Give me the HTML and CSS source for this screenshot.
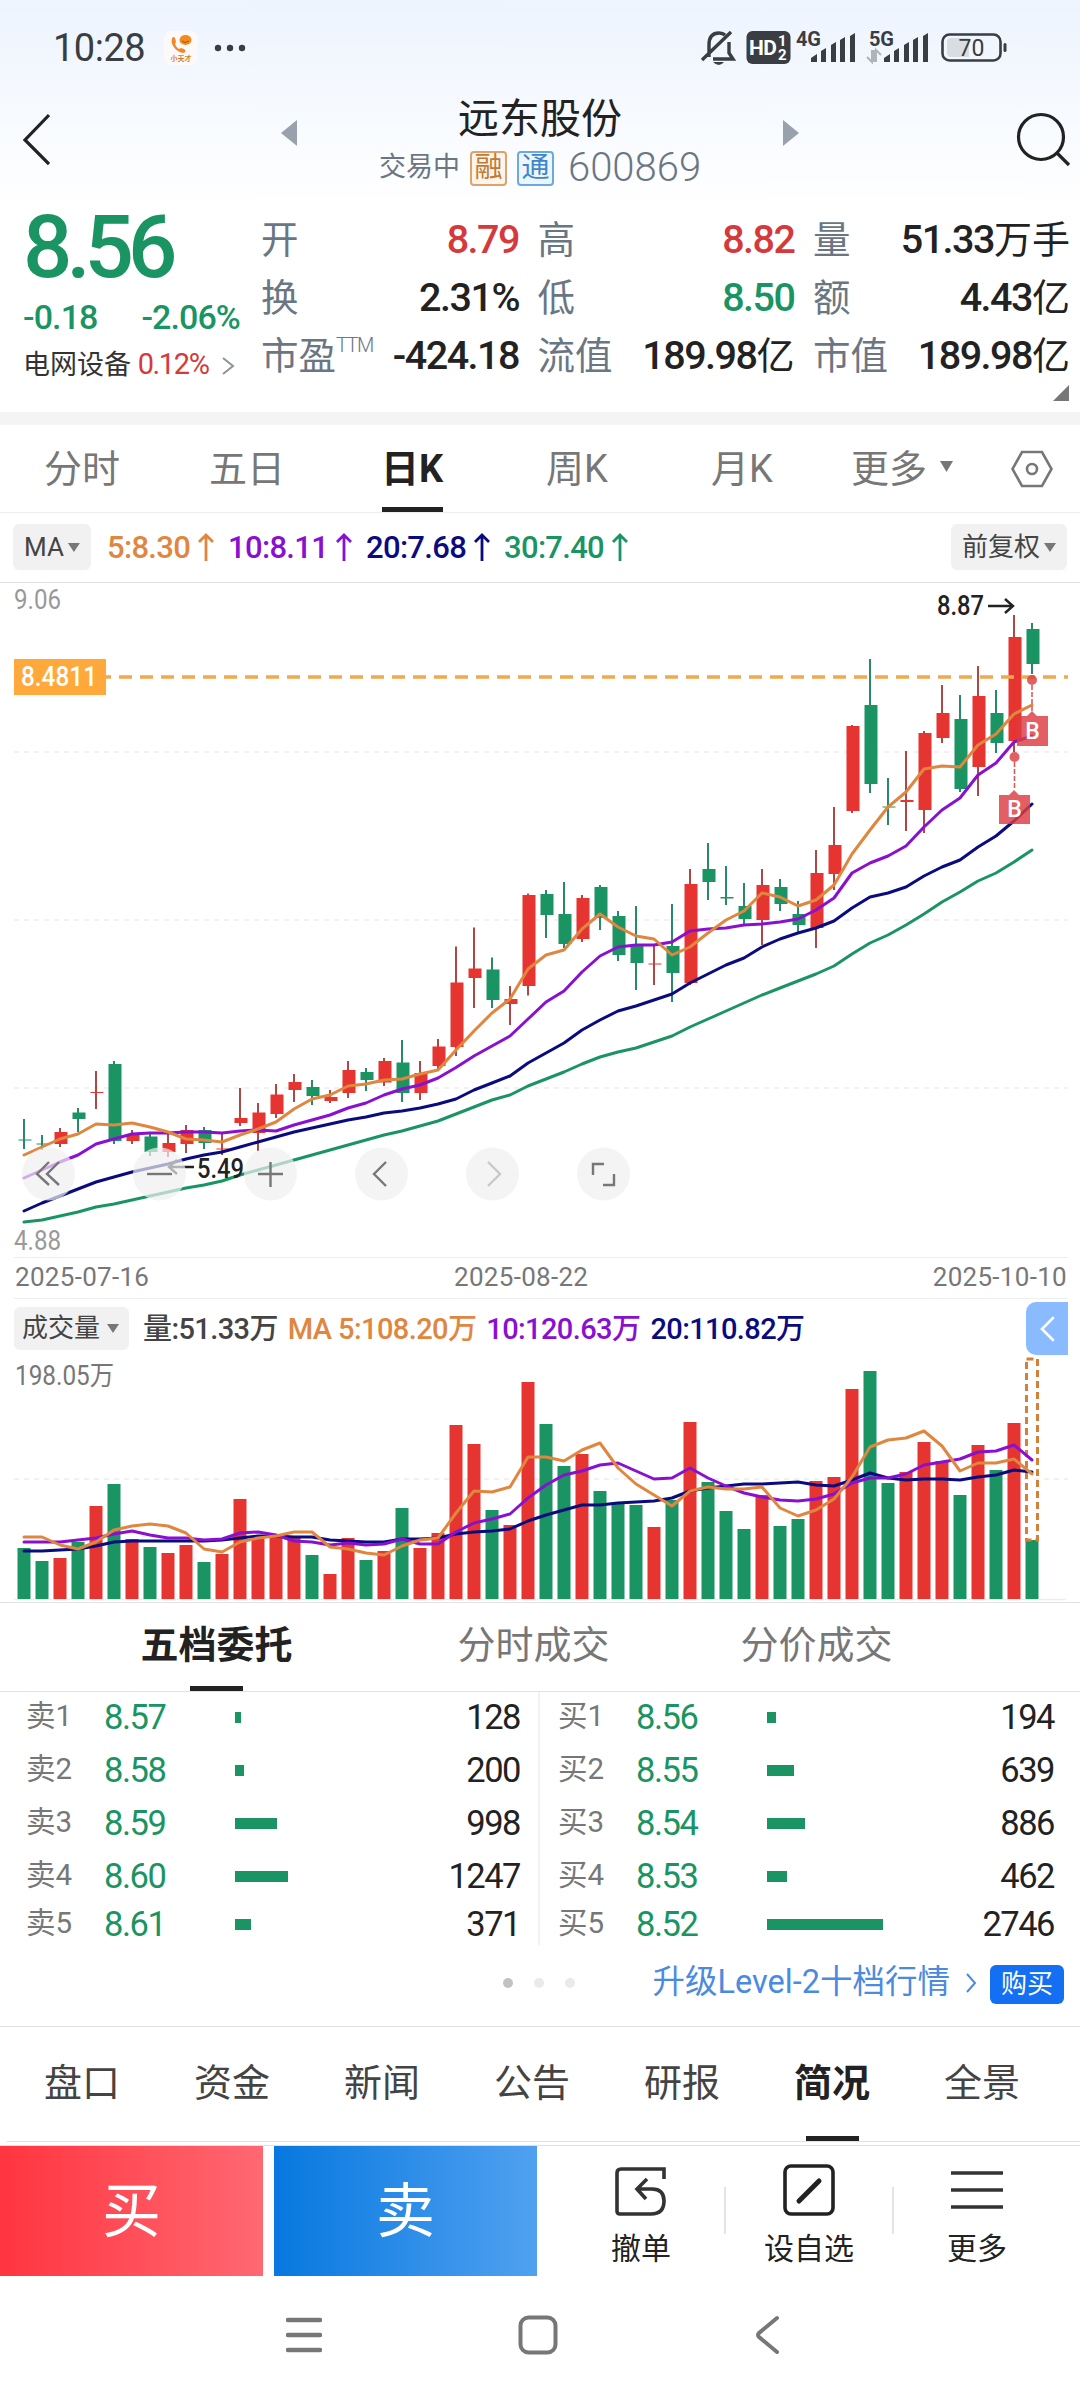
FILE: index.html
```html
<!DOCTYPE html>
<html lang="zh-CN">
<head>
    <meta charset="UTF-8">
    <meta name="viewport" content="width=device-width, initial-scale=1.0">
    <title>远东股份 600869</title>
    <link rel="stylesheet" href="styles.css">
</head>
<body>
    <div class="top">
        <div class="status-bar">
            <span class="clock">10:28</span>
            <svg class="app-icon" width="34" height="34" viewBox="0 0 34 34">
                <rect width="34" height="34" rx="8" fill="#fbfaf8"/>
                <path d="M8 8c-2 5 4 13 11 14 3 0 3-3 1-4l-3-1-2 1c-2-1-3-3-4-5l1-2-1-4c-1-2-3-1-3 1z" fill="#f0872a"/>
                <ellipse cx="21.500" cy="9" rx="6" ry="5" fill="#f58a1f"/>
                <path d="M18 10q3 3 7 0" fill="none" stroke="#a35200" stroke-width="1"/>
                <text x="17" y="30" font-size="7" font-weight="700" text-anchor="middle" fill="#e07a2a">小天才</text>
            </svg>
            <svg class="dots" width="32" height="8" viewBox="0 0 32 8" fill="#3a3d42">
                <circle cx="4" cy="4" r="3.200"/><circle cx="16" cy="4" r="3.200"/><circle cx="28" cy="4" r="3.200"/>
            </svg>
            <svg class="signals" width="310" height="40" viewBox="700 28 310 40" fill="#3a3d42">
                <g fill="none" stroke="#3a3d42" stroke-width="3.400">
                    <path d="M710 57V45q0-12 10-12 4 0 6 2M730 42v11l4 6H714M703 60l29-28"/>
                </g>
                <path d="M714 62h11q-5 6-11 0z"/>
                <rect x="747.500" y="31" width="44" height="33" rx="6"/>
                <text x="750" y="55" font-size="21" font-weight="700" fill="#fff" textLength="28">HD</text>
                <text x="779" y="46" font-size="15" font-weight="700" fill="#fff">1</text>
                <text x="779" y="60" font-size="15" font-weight="700" fill="#fff">2</text>
                <text x="797" y="46" font-size="20" font-weight="700" textLength="25">4G</text>
                <text x="870" y="46" font-size="20" font-weight="700" textLength="25">5G</text>
                <path d="M812 62v-4l6-4v8zM822 62v-11l5-3v14zM832 62v-17l5-3v20zM841 62v-22l5-3v25zM851 62v-26l5-3v29z"/>
                <path d="M885 62v-4l6-4v8zM895 62v-11l5-3v14zM905 62v-17l5-3v20zM914 62v-22l5-3v25zM924 62v-26l5-3v29z"/>
                <path d="M868 57l5 5V51h2v11M882 55l-5-5v11h-1" stroke="#b0b4ba" stroke-width="2" fill="none"/>
                <rect x="943.500" y="34.500" width="58" height="26" rx="7" fill="none" stroke="#3a3d42" stroke-width="2.600"/>
                <path d="M952 38h18v19h-18q-4 0-4-4V42q0-4 4-4z" fill="#d9dce1"/>
                <text x="972.500" y="56" font-size="23" text-anchor="middle">70</text>
                <rect x="1004.500" y="43" width="3" height="9" rx="1.500"/>
            </svg>
        </div>

        <div class="header">
            <svg width="50" height="54" viewBox="0 0 50 54" fill="none" stroke="#222" stroke-width="3.200">
                <path d="M49 3L25 28l24 24"/>
            </svg>
            <div class="switcher">
                <i class="arrow-left"></i>
                <div class="stock">
                    <div class="stock-name">远东股份</div>
                    <div class="stock-code">
                        <span>交易中</span>
                        <b class="badge-rong">融</b>
                        <b class="badge-tong">通</b>
                        <span class="code">600869</span>
                    </div>
                </div>
                <i class="arrow-right"></i>
            </div>
            <svg class="search" width="64" height="60" viewBox="0 0 64 60" fill="none" stroke="#222" stroke-width="3.200">
                <circle cx="25" cy="27" r="22.500"/>
                <path d="M41 43l12 12"/>
            </svg>
        </div>

        <div class="quote">
            <div class="quote-main">
                <div class="price">8.56</div>
                <div class="change"><span>-0.18</span><span>-2.06%</span></div>
                <div class="sector">电网设备 <span class="red">0.12%</span>
                    <svg width="14" height="20" viewBox="0 0 14 20" fill="none" stroke="#8b939c" stroke-width="2"><path d="M2 2l10 8-10 8"/></svg>
                </div>
            </div>
            <div class="quote-grid">
                <div class="cell"><label>开</label><span class="red">8.79</span></div>
                <div class="cell"><label>高</label><span class="red">8.82</span></div>
                <div class="cell"><label>量</label><span>51.33<em>万手</em></span></div>
                <div class="cell"><label>换</label><span>2.31%</span></div>
                <div class="cell"><label>低</label><span class="green">8.50</span></div>
                <div class="cell"><label>额</label><span>4.43<em>亿</em></span></div>
                <div class="cell"><label>市盈<sup>TTM</sup></label><span>-424.18</span></div>
                <div class="cell"><label>流值</label><span>189.98<em>亿</em></span></div>
                <div class="cell"><label>市值</label><span>189.98<em>亿</em></span></div>
            </div>
            <i class="corner"></i>
        </div>
    </div>

    <div class="period-tabs">
        <div class="tab">分时</div>
        <div class="tab">五日</div>
        <div class="tab active">日K</div>
        <div class="tab">周K</div>
        <div class="tab">月K</div>
        <div class="tab more">更多<i class="caret"></i></div>
        <svg class="gear" width="42" height="38" viewBox="0 0 42 38" fill="none" stroke="#777" stroke-width="2.600">
            <path d="M11 2h20l9.500 17L31 36H11L1.500 19z"/>
            <circle cx="21" cy="19" r="5"/>
        </svg>
    </div>

    <div class="ma-row">
        <span class="chip">MA<i class="caret"></i></span>
        <span class="ma ma5">5:8.30</span><svg class="up ma5" viewBox="0 0 16 28"><path d="M8 28V2M1 9l7-7 7 7"/></svg>
        <span class="ma ma10">10:8.11</span><svg class="up ma10" viewBox="0 0 16 28"><path d="M8 28V2M1 9l7-7 7 7"/></svg>
        <span class="ma ma20">20:7.68</span><svg class="up ma20" viewBox="0 0 16 28"><path d="M8 28V2M1 9l7-7 7 7"/></svg>
        <span class="ma ma30">30:7.40</span><svg class="up ma30" viewBox="0 0 16 28"><path d="M8 28V2M1 9l7-7 7 7"/></svg>
        <span class="chip right">前复权<i class="caret"></i></span>
    </div>

    <svg class="kline" width="1080" height="674" viewBox="0 583 1080 674">
        <path class="grid" d="M14 752H1068M14 920H1068M14 1088H1068"/>
        <g id="candles"></g>
        <g id="ma-lines"></g>

        <path class="cost-line" d="M106 677H1068"/>
        <rect x="14" y="659" width="92" height="36" fill="#ffa93c"/>
        <text x="21" y="686" font-size="27" font-weight="500" fill="#fff" textLength="76" lengthAdjust="spacingAndGlyphs">8.4811</text>

        <text class="axis" x="14" y="609" textLength="47" lengthAdjust="spacingAndGlyphs">9.06</text>
        <text class="axis" x="14" y="1250" textLength="47" lengthAdjust="spacingAndGlyphs">4.88</text>

        <text class="mark" x="937" y="615" textLength="47" lengthAdjust="spacingAndGlyphs">8.87</text>
        <path class="mark-arrow" d="M988 606h25M1005 599l8 7-8 7"/>
        <text class="mark" x="197" y="1178" textLength="47" lengthAdjust="spacingAndGlyphs">5.49</text>
        <path class="mark-arrow" d="M194 1167h-25M177 1160l-8 7 8 7"/>

        <!-- buy marks -->
        <g class="buy-mark">
            <circle cx="1032" cy="680" r="5"/>
            <path class="leader" d="M1032 685v28"/>
            <path d="M1017 716h10l5-5 5 5h11v30h-31z"/>
            <text x="1032.500" y="739">B</text>
        </g>
        <g class="buy-mark">
            <circle cx="1014.500" cy="757" r="5"/>
            <path class="leader" d="M1014.500 762v28"/>
            <path d="M999 795h10l5-5 5 5h11v29H999z"/>
            <text x="1014.500" y="817">B</text>
        </g>

        <g class="tools">
            <circle cx="48.500" cy="1174" r="26.500"/><path d="M49 1162l-12 12 12 11M59 1162l-12 12 12 11"/>
            <circle cx="159.500" cy="1174" r="26.500"/><path d="M147 1174h25"/>
            <circle cx="270.500" cy="1174" r="26.500"/><path d="M258 1174h25M270.500 1162v25"/>
            <circle cx="381.500" cy="1174" r="26.500"/><path d="M386 1162l-12 12 12 12"/>
            <circle cx="492.500" cy="1174" r="26.500"/><path class="off" d="M488 1162l12 12-12 12"/>
            <circle cx="603.500" cy="1174" r="26.500"/><path d="M593 1175v-11h11M614 1174v11h-11"/>
        </g>
    </svg>

    <div class="dates">
        <span>2025-07-16</span><span>2025-08-22</span><span>2025-10-10</span>
    </div>

    <div class="vol-row">
        <span class="chip">成交量<i class="caret"></i></span>
        <span class="ma">量:51.33万</span>
        <span class="ma ma5">MA 5:108.20万</span>
        <span class="ma ma10">10:120.63万</span>
        <span class="ma ma20">20:110.82万</span>
        <span class="drawer"><svg width="16" height="26" viewBox="0 0 16 26" fill="none" stroke="#fff" stroke-width="2.600" stroke-linecap="round"><path d="M14 2L3 13l11 11"/></svg></span>
    </div>

    <svg class="volume" width="1080" height="246" viewBox="0 1355 1080 246">
        <path class="grid" d="M14 1479H1068"/>
        <path d="M14 1599.500H1066" stroke="#eee" stroke-width="1.500"/>
        <text x="15" y="1385" font-size="27" fill="#777" textLength="99" lengthAdjust="spacingAndGlyphs">198.05万</text>
        <g id="volumes"></g>
        <rect x="1026.500" y="1359" width="11" height="181" fill="none" stroke="#d4803a" stroke-width="3" stroke-dasharray="7 4"/>
        <g id="vol-lines"></g>
    </svg>

    <div class="order-tabs">
        <div class="tab active">五档委托</div>
        <div class="tab">分时成交</div>
        <div class="tab">分价成交</div>
    </div>

    <div class="orders">
        <div class="side">
            <div class="order"><span>卖1</span><b>8.57</b><i style="width: 6px"></i><em>128</em></div>
            <div class="order"><span>卖2</span><b>8.58</b><i style="width: 9px"></i><em>200</em></div>
            <div class="order"><span>卖3</span><b>8.59</b><i style="width: 42px"></i><em>998</em></div>
            <div class="order"><span>卖4</span><b>8.60</b><i style="width: 53px"></i><em>1247</em></div>
            <div class="order"><span>卖5</span><b>8.61</b><i style="width: 16px"></i><em>371</em></div>
        </div>
        <div class="side">
            <div class="order"><span>买1</span><b>8.56</b><i style="width: 9px"></i><em>194</em></div>
            <div class="order"><span>买2</span><b>8.55</b><i style="width: 27px"></i><em>639</em></div>
            <div class="order"><span>买3</span><b>8.54</b><i style="width: 38px"></i><em>886</em></div>
            <div class="order"><span>买4</span><b>8.53</b><i style="width: 20px"></i><em>462</em></div>
            <div class="order"><span>买5</span><b>8.52</b><i style="width: 116px"></i><em>2746</em></div>
        </div>
    </div>

    <div class="upgrade">
        <div class="pager"><i class="on"></i><i></i><i></i></div>
        <div class="level2">
            <span>升级Level-2十档行情</span>
            <svg width="12" height="20" viewBox="0 0 12 20" fill="none" stroke="#4a8be0" stroke-width="2"><path d="M2 1l8 9-8 9"/></svg>
            <b>购买</b>
        </div>
    </div>

    <div class="info-tabs">
        <div class="tab">盘口</div>
        <div class="tab">资金</div>
        <div class="tab">新闻</div>
        <div class="tab">公告</div>
        <div class="tab">研报</div>
        <div class="tab active">简况</div>
        <div class="tab">全景</div>
    </div>

    <div class="trade-bar">
        <div class="buy">买</div>
        <div class="sell">卖</div>
        <div class="actions">
            <div class="action">
                <svg width="52" height="52" viewBox="0 0 52 52" fill="none" stroke="#333" stroke-width="3.600">
                    <path d="M49 15V5H6Q2 5 2 9v38q0 3 3 3h31q13 0 13-13 0-12-12-12H24M32 15L22 25l9 10"/>
                </svg>
                <span>撤单</span>
            </div>
            <div class="action">
                <svg width="52" height="52" viewBox="0 0 52 52" fill="none" stroke="#222" stroke-width="3.600">
                    <rect x="2" y="2" width="48" height="48" rx="6"/>
                    <path d="M16 37l20-20" stroke-width="5" stroke-linecap="round"/>
                </svg>
                <span>设自选</span>
            </div>
            <div class="action">
                <svg width="52" height="52" viewBox="0 0 52 52" fill="none" stroke="#333" stroke-width="3.600">
                    <path d="M0 9h52M0 26h52M0 43h52"/>
                </svg>
                <span>更多</span>
            </div>
        </div>
    </div>

    <div class="nav-bar">
        <svg width="36" height="38" viewBox="0 0 36 38" stroke="#777" stroke-width="4.500" stroke-linecap="round"><path d="M2 4h32M2 19h32M2 34h32"/></svg>
        <svg width="40" height="40" viewBox="0 0 40 40" fill="none" stroke="#777" stroke-width="4"><rect x="2.500" y="2.500" width="35" height="35" rx="8"/></svg>
        <svg width="26" height="40" viewBox="0 0 26 40" fill="none" stroke="#777" stroke-width="4" stroke-linecap="round"><path d="M23 3L5 18q-2 2 0 4l18 15"/></svg>
    </div>

    <script src="chart.js"></script>
</body>
</html>
```
FILE: styles.css
```css
* {
    margin: 0;
    padding: 0;
    box-sizing: border-box;
}

body {
    width: 1080px;
    height: 2400px;
    background: #fff;
    color: #222;
    font-family: Roboto, 'Noto Sans CJK SC', sans-serif;
    overflow: hidden;
}

b, i, em {
    font-weight: 400;
    font-style: normal;
}

.red { color: #d5393b; }
.green { color: #1b9463; }

.top {
    height: 412px;
    background: linear-gradient(#edf4fe, #fff 210px);
}

/* Status bar */
.status-bar {
    display: flex;
    align-items: center;
    height: 96px;
    padding: 0 71px 0 53px;
    color: #3a3d42;
}

.clock {
    width: 111px;
    font-size: 38px;
    letter-spacing: -0.5px;
}

.dots {
    margin-left: 16px;
}

.signals {
    margin-left: auto;
}

/* Title */
.header {
    display: flex;
    justify-content: space-between;
    height: 104px;
}

.header > svg {
    margin-top: 16px;
}

.header .search {
    margin-top: 14px;
}

.switcher {
    display: flex;
    justify-content: space-between;
    width: 518px;
    margin-left: 14px;
}

.arrow-left, .arrow-right {
    width: 16px;
    height: 26px;
    margin-top: 24px;
    background: #98a1ac;
    clip-path: polygon(100% 0, 100% 100%, 0 50%);
}

.arrow-right {
    clip-path: polygon(0 0, 100% 50%, 0 100%);
}

.stock {
    text-align: center;
}

.stock-name {
    height: 50px;
    font-size: 41px;
    line-height: 46px;
}

.stock-code {
    display: flex;
    align-items: center;
    gap: 10px;
    height: 44px;
    font-size: 27px;
    line-height: 40px;
    color: #6b7683;
}

.stock-code span:first-child {
    margin-top: -2px;
}

.stock-code b {
    width: 37px;
    height: 35px;
    border: 2px solid #dca468;
    border-radius: 4px;
    background: #fdf5ec;
    color: #c07a34;
    font-size: 28px;
    line-height: 30px;
}

.stock-code .badge-tong {
    border-color: #6aa9e4;
    background: #edf5fd;
    color: #3d86cc;
}

.stock-code .code {
    margin-left: 4px;
    font-size: 40px;
    font-weight: 350;
}

/* Quote */
.quote {
    position: relative;
    display: flex;
    height: 212px;
    padding: 0 9px 0 23px;
}

.quote-main {
    width: 238px;
    color: #1b9463;
}

.price {
    height: 94px;
    font-size: 87px;
    font-weight: 500;
    line-height: 94px;
    letter-spacing: -6px;
}

.change {
    display: flex;
    justify-content: space-between;
    width: 217px;
    height: 48px;
    font-size: 34px;
    font-weight: 500;
    line-height: 46px;
    letter-spacing: -0.9px;
}

.sector {
    font-size: 27px;
    line-height: 44px;
    color: #333;
    white-space: nowrap;
}

.sector .red {
    font-size: 29px;
    letter-spacing: -1.4px;
}

.sector svg {
    margin-left: 6px;
    vertical-align: -2px;
}

.quote-grid {
    display: grid;
    grid-template-columns: 258px 257px 257px;
    grid-auto-rows: 58px;
    column-gap: 18.5px;
    height: 174px;
    margin-top: 11px;
}

.cell {
    display: flex;
    justify-content: space-between;
    align-items: center;
    white-space: nowrap;
    line-height: 58px;
}

.cell label {
    font-size: 37.5px;
    color: #6b7683;
}

.cell sup {
    font-size: 20px;
    font-weight: 300;
    letter-spacing: -1.5px;
    vertical-align: 17px;
    line-height: 0;
}

.cell span {
    font-size: 39.5px;
    font-weight: 500;
    letter-spacing: -1.5px;
}

.cell em {
    font-size: 38px;
    letter-spacing: 0;
}

.corner {
    position: absolute;
    right: 11px;
    bottom: 11px;
    width: 16px;
    height: 16px;
    background: #777;
    clip-path: polygon(100% 0, 100% 100%, 0 100%);
}

/* K line period */
.period-tabs {
    display: flex;
    height: 101px;
    padding-right: 27px;
    border-top: 13px solid #f4f4f4;
    border-bottom: 1px solid #eee;
    align-items: center;
}

.tab {
    position: relative;
    display: flex;
    justify-content: center;
    align-items: center;
    font-size: 38px;
    color: #777;
}

.period-tabs .tab {
    width: 165px;
    height: 87px;
    padding: 0 1px 6px 0;
}

.period-tabs .more {
    width: 155px;
}

.gear {
    margin-left: auto;
}

.tab.active {
    color: #222;
    font-weight: 700;
}

.tab.active::after {
    content: '';
    position: absolute;
    bottom: 0;
    width: 53px;
    height: 5px;
    background: #222;
}

.period-tabs .active::after {
    width: 61px;
}

.caret {
    display: inline-block;
    width: 12px;
    height: 9px;
    margin-left: 4px;
    background: #777;
    clip-path: polygon(0 0, 100% 0, 50% 100%);
    vertical-align: 4px;
}

.more .caret {
    height: 11px;
    width: 13px;
    margin: 2px 0 0 13px;
}

.ma-row {
    display: flex;
    align-items: center;
    height: 70px;
    padding: 0 13px 1px;
    border-bottom: 1.5px solid #e2e2e2;
}

.chip {
    height: 46px;
    padding: 0 11px;
    border-radius: 6px;
    background: #f1f1f1;
    color: #444;
    font-size: 26px;
    line-height: 46px;
    white-space: nowrap;
}

.ma-row .chip:first-child {
    width: 78px;
    margin-right: 16px;
}

.chip.right {
    width: 116px;
    margin-left: auto;
}

.ma {
    font-size: 31px;
    font-weight: 500;
    letter-spacing: -0.7px;
    white-space: nowrap;
}

.up {
    width: 16px;
    height: 28px;
    margin: 0 14px 0 8px;
    fill: none;
    stroke: currentColor;
    stroke-width: 2.8;
}

.ma5 { color: #e0863f; }
.ma10 { color: #8a10d0; }
.ma20 { color: #0b0b80; }
.ma30 { color: #1b9463; }

/* K line chart */
.kline, .volume {
    display: block;
}

.grid {
    fill: none;
    stroke: #ededee;
    stroke-width: 1.5;
    stroke-dasharray: 5 5;
}

.axis {
    font-size: 27px;
    fill: #999;
}

.mark {
    font-size: 27px;
    font-weight: 500;
    fill: #222;
}

.mark-arrow {
    fill: none;
    stroke: #222;
    stroke-width: 2.4;
}

.line {
    fill: none;
    stroke: currentColor;
    stroke-width: 3;
    stroke-linejoin: round;
    stroke-linecap: round;
}

.cost-line {
    stroke: #f0a94c;
    stroke-width: 3.4;
    stroke-dasharray: 13 8;
    stroke-dashoffset: 8;
}

.buy-mark {
    fill: rgba(220, 60, 65, 0.82);
}

.buy-mark .leader {
    stroke: #dc5a5e;
    stroke-width: 1.6;
    stroke-dasharray: 5 2;
}

.buy-mark text {
    font-size: 23px;
    font-weight: 500;
    text-anchor: middle;
    fill: #fff;
}

.tools circle {
    fill: rgba(240, 240, 240, 0.7);
}

.tools path {
    fill: none;
    stroke: #777;
    stroke-width: 2.4;
}

.tools .off {
    stroke: #c8c8c8;
}

.dates {
    display: grid;
    grid-template-columns: 439px 1fr auto;
    height: 42px;
    margin: 0 12px 0 14px;
    padding: 0 1px;
    border-top: 1.5px solid #eee;
    border-bottom: 1.5px solid #eee;
    color: #777;
    font-size: 26px;
    line-height: 39px;
    letter-spacing: 0.3px;
}

/* Volume */
.vol-row {
    display: flex;
    align-items: center;
    height: 56px;
    padding: 3px 0 0 14px;
}

.vol-row .chip {
    width: 115px;
    height: 43px;
    margin-right: 14px;
    padding: 0 8px;
    line-height: 42px;
}

.vol-row .caret {
    margin-left: 7px;
}

.vol-row .ma {
    margin: -5px 10px 0 0;
    font-size: 29px;
    letter-spacing: -0.6px;
}

.vol-row .ma:nth-child(2) {
    color: #444;
}

.drawer {
    display: flex;
    justify-content: center;
    align-items: center;
    width: 42px;
    height: 53px;
    margin: 0 12px 0 auto;
    border-radius: 10px 0 0 10px;
    background: #8abaff;
}

/* Order book */
.order-tabs {
    display: flex;
    height: 90px;
    padding-left: 58px;
    margin-top: 1px;
    border-top: 1.5px solid #e2e2e2;
    border-bottom: 1.5px solid #e2e2e2;
}

.order-tabs .tab {
    width: 317px;
    padding-bottom: 11px;
}

.order-tabs .tab:last-child {
    width: 249px;
}

.orders {
    display: flex;
    height: 253px;
}

.side {
    width: 540px;
    padding: 0 18px 0 26px;
    border-right: 2px solid #f2f2f2;
}

.side + .side {
    padding: 0 26px 0 18px;
    border: 0;
}

.order {
    display: grid;
    grid-template-columns: 78px 131px auto 1fr;
    align-items: center;
    height: 53px;
    font-size: 34.5px;
    line-height: 40px;
}

.order:last-child {
    height: 43px;
}

.order span {
    margin-top: -5px;
    color: #777;
    font-size: 29.5px;
}

.order b {
    margin-top: -4px;
    color: #1b9463;
    letter-spacing: -1.5px;
}

.order i {
    height: 11px;
    margin-top: -2px;
    background: #1b9463;
}

.order em {
    margin-top: -4px;
    text-align: right;
    letter-spacing: -1.5px;
}

.upgrade {
    display: flex;
    align-items: center;
    height: 82px;
    padding: 0 16px 6px 503px;
    border-bottom: 1.5px solid #e2e2e2;
}

.pager {
    display: flex;
    gap: 21px;
}

.pager i {
    width: 10px;
    height: 10px;
    border-radius: 50%;
    background: #eaeaea;
}

.pager .on {
    background: #c2c2c2;
}

.level2 {
    display: flex;
    align-items: center;
    margin-left: auto;
    color: #4a8be0;
    font-size: 32.5px;
    line-height: 40px;
    white-space: nowrap;
}

.level2 span {
    margin-top: -2px;
}

.level2 svg {
    margin: 0 13px 0 15px;
}

.level2 b {
    width: 74px;
    height: 39px;
    margin-top: 4px;
    border-radius: 6px;
    background: #146ff2;
    color: #fff;
    font-size: 26px;
    line-height: 38px;
    text-align: center;
}

.info-tabs {
    display: flex;
    height: 115px;
    margin-left: 7px;
    border-bottom: 1.5px solid #e2e2e2;
}

.info-tabs .tab {
    width: 150px;
    padding-bottom: 9px;
    color: #444;
}

.info-tabs .active {
    color: #222;
}

/* Trade bar */
.trade-bar {
    display: flex;
    height: 134px;
    margin-top: 3px;
    border-top: 1.5px solid #e2e2e2;
}

.buy, .sell {
    width: 263px;
    height: 130px;
    background: linear-gradient(90deg, #ff3540, #ff6872);
    color: #fff;
    font-size: 59px;
    line-height: 131px;
    text-align: center;
}

.sell {
    margin-left: 11px;
    background: linear-gradient(90deg, #0778df, #50a1f0);
}

.actions {
    display: flex;
    flex: 1;
    margin-left: 20px;
}

.action {
    position: relative;
    display: flex;
    flex-direction: column;
    align-items: center;
    width: 168px;
    padding-top: 18px;
    font-size: 30px;
    line-height: 44px;
}

.action span {
    margin-top: 11px;
}

.action + .action::before {
    content: '';
    position: absolute;
    left: -1px;
    top: 41px;
    width: 2px;
    height: 47px;
    background: #e4e4e4;
}

.nav-bar {
    display: flex;
    align-items: center;
    height: 112px;
    padding: 0 300px 0 286px;
    justify-content: space-between;
}
```
FILE: chart.js
```js
// Candles: [direction, high, body top, body bottom, low, volume top]
const candles = [
    ['g', 1119, 1139.5, 1140.5, 1149, 1548], ['g', 1135, 1143.5, 1144.5, 1150, 1561], ['r', 1128, 1132, 1144, 1147, 1558],
    ['g', 1108, 1112.5, 1119, 1132, 1542], ['r', 1071, 1092, 1093, 1109, 1506], ['g', 1061, 1064, 1141, 1144, 1484],
    ['r', 1130, 1134, 1141, 1144, 1539], ['g', 1134, 1136.5, 1152, 1156, 1547], ['r', 1133, 1143, 1152, 1157, 1553],
    ['r', 1125, 1130, 1144, 1153, 1545], ['g', 1127, 1130, 1143, 1149, 1562], ['r', 1133, 1148.5, 1149.5, 1155, 1554],
    ['r', 1088, 1118, 1123, 1126, 1499], ['r', 1103, 1112.5, 1133, 1151, 1536], ['r', 1084, 1094.5, 1114, 1118, 1536],
    ['r', 1074, 1082, 1090, 1102, 1538], ['g', 1080, 1087, 1096, 1105, 1555], ['r', 1090, 1097, 1101, 1103, 1574],
    ['r', 1061, 1070, 1093, 1098, 1538], ['g', 1068, 1072, 1080, 1091, 1560], ['r', 1058, 1061, 1082.5, 1086, 1551],
    ['g', 1040, 1062.5, 1093, 1102, 1508], ['r', 1061, 1073, 1093, 1100, 1548], ['r', 1039, 1046.5, 1066, 1069, 1533],
    ['r', 946.5, 982.5, 1047, 1056, 1425], ['r', 927.5, 968.5, 978, 1008, 1444], ['g', 957.5, 969.5, 1000, 1008, 1510],
    ['r', 986, 999, 1004, 1025, 1525], ['r', 893.5, 895, 986, 995.5, 1382], ['g', 890, 894, 915, 938, 1424],
    ['g', 882, 914, 944, 948, 1466], ['r', 895, 898, 939, 942, 1454], ['g', 885, 887, 918, 930, 1491],
    ['g', 911, 916, 955, 961, 1503], ['g', 906, 946, 963, 990, 1505], ['r', 944, 963.5, 964.5, 985, 1527],
    ['g', 904, 946, 973, 1002, 1500], ['r', 869, 884, 983, 985, 1422], ['g', 843, 869, 882, 900, 1482],
    ['g', 866, 897, 898.5, 905, 1511], ['g', 883, 906, 919, 925, 1529], ['r', 869, 885, 920, 945, 1495],
    ['g', 879, 887, 904, 911, 1526], ['g', 901, 914, 925, 932, 1519], ['r', 850, 873, 928, 948, 1481],
    ['r', 807, 845, 874, 890, 1477], ['r', 725, 726, 811, 813, 1389], ['g', 659, 705, 784, 793, 1371],
    ['g', 778, 806.5, 807.5, 825, 1483], ['r', 751, 800, 802, 831, 1472], ['r', 731, 733, 810, 833, 1442],
    ['r', 685, 713, 738, 743, 1461], ['g', 695, 719, 789, 792, 1495], ['r', 666, 696, 767, 796, 1445],
    ['g', 690, 713, 743, 753, 1470], ['r', 615, 637, 741, 752, 1423], ['g', 623, 629, 664, 674, 1540]
];

const priceLines = {
    ma5: [1155, 1147, 1139, 1134, 1124, 1125, 1123, 1127, 1132, 1139, 1140, 1142, 1135, 1129, 1122, 1109, 1099, 1095, 1086, 1084, 1080, 1079, 1074, 1070, 1050, 1031, 1013, 999, 969, 955, 950, 929, 914, 927, 936, 939, 955, 947, 933, 920, 911, 893, 897, 906, 900, 885, 854, 830, 807, 792, 769, 766, 767, 745, 734, 714, 705],
    ma10: [1178, 1170, 1162, 1155, 1144, 1139, 1134, 1133, 1133, 1132, 1132, 1133, 1131, 1130, 1131, 1125, 1120, 1115, 1108, 1103, 1095, 1089, 1085, 1078, 1067.5, 1056, 1046, 1036, 1019, 1002, 991, 972, 956, 947, 945, 945, 942, 931, 929, 928, 925, 924, 922, 919, 910, 898, 873, 863, 856, 846, 827, 810, 798, 775, 763, 742, 736],
    ma20: [1211, 1203, 1196, 1189, 1182, 1177, 1172, 1168, 1164, 1159, 1155, 1152, 1147, 1142, 1137, 1132, 1128, 1124, 1120, 1117, 1113, 1111, 1108, 1104, 1099, 1090, 1083, 1076, 1063, 1053, 1043, 1030, 1020, 1011, 1006, 1000, 994, 983, 974, 965, 958, 947, 939, 933, 928, 921, 908, 897, 893, 887, 876, 867, 860, 847, 836, 821, 804],
    ma30: [1222, 1220, 1216, 1212, 1207, 1204, 1200, 1196, 1192, 1188, 1185, 1181, 1175, 1170, 1165, 1160, 1155, 1150, 1145, 1140, 1135, 1131, 1126, 1121, 1114, 1107, 1100, 1095, 1086, 1079, 1072, 1064, 1057, 1052, 1048, 1042, 1036, 1027, 1019, 1011, 1003, 995, 988, 981, 974, 966, 954, 943, 935, 925, 914, 902, 892, 881, 873, 862, 850]
};

const volumeLines = {
    ma5: [1537, 1537, 1545, 1549, 1542, 1530, 1526, 1524, 1526, 1533, 1549, 1552, 1542, 1538, 1536, 1532, 1532, 1547, 1549, 1553, 1555, 1546, 1540, 1538, 1513, 1491, 1492, 1487, 1457, 1457, 1461, 1450, 1443, 1468, 1484, 1495, 1506, 1491, 1487, 1489, 1489, 1487, 1508, 1516, 1510, 1499, 1477, 1447, 1440, 1438, 1431, 1446, 1471, 1463, 1463, 1459, 1474],
    ma10: [1542, 1542, 1542, 1540, 1538, 1534, 1531, 1535, 1538, 1538, 1540, 1539, 1533, 1532, 1535, 1541, 1542, 1545, 1543, 1545, 1544, 1539, 1544, 1544, 1532, 1523, 1519, 1514, 1498, 1485, 1475, 1471, 1465, 1463, 1471, 1479, 1478, 1468, 1478, 1486, 1493, 1497, 1500, 1501, 1499, 1494, 1483, 1478, 1478, 1474, 1465, 1462, 1459, 1452, 1451, 1445, 1460],
    ma20: [1551, 1551, 1550, 1549, 1546, 1542, 1541, 1541, 1541, 1541, 1541, 1540, 1538, 1536, 1536, 1537, 1537, 1540, 1541, 1542, 1542, 1539, 1539, 1538, 1534, 1532, 1531, 1529, 1521, 1515, 1510, 1505, 1505, 1503, 1502, 1501, 1498, 1491, 1488, 1486, 1484, 1484, 1483, 1482, 1485, 1486, 1480, 1473, 1478, 1480, 1479, 1479, 1480, 1477, 1475, 1470, 1472]
};

const fills = { r: '#e63431', g: '#1b9463' };
const wicks = { r: '#a8403d', g: '#1f8460' };
const baseline = 1599;

function x(i) {
    return 24 + i * 18;
}

let candleHtml = '';
let volumeHtml = '';
candles.forEach(([dir, high, top, bottom, low, vol], i) => {
    candleHtml += `<path d="M${x(i)} ${high}V${low}" stroke="${wicks[dir]}" stroke-width="1.9"/>`;
    candleHtml += `<rect x="${x(i) - 5.5}" y="${top}" width="13" height="${bottom - top}" fill="${fills[dir]}"/>`;
    volumeHtml += `<rect x="${x(i) - 6.5}" y="${vol}" width="13" height="${baseline - vol}" fill="${fills[dir]}"/>`;
});
document.getElementById('candles').innerHTML = candleHtml;
document.getElementById('volumes').innerHTML = volumeHtml;

function drawLines(id, lines) {
    let html = '';
    for (const name of Object.keys(lines).reverse()) {
        const points = lines[name].map((y, i) => `${x(i)},${y}`).join(' ');
        html += `<polyline class="line ${name}" points="${points}"/>`;
    }
    document.getElementById(id).innerHTML = html;
}

drawLines('ma-lines', priceLines);
drawLines('vol-lines', volumeLines);
```
